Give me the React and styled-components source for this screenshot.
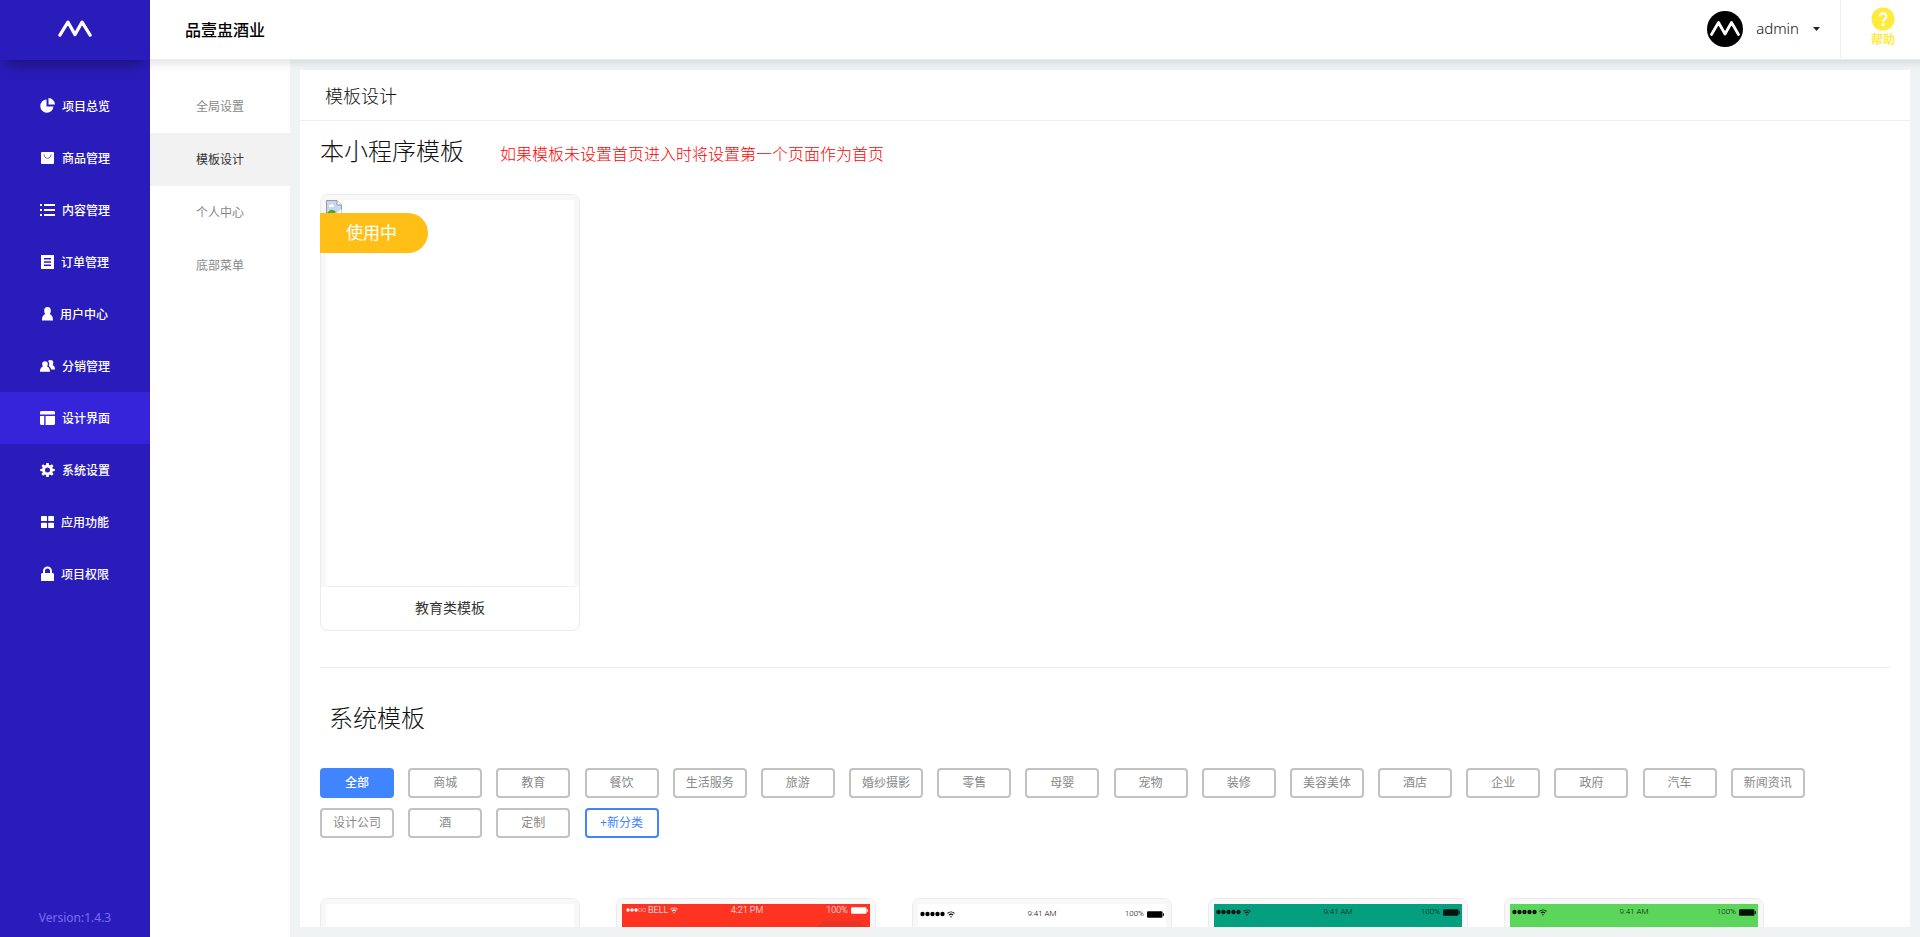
import React from "react";
import styled, { createGlobalStyle, css } from "styled-components";

const GlobalStyle = createGlobalStyle`
  *, *::before, *::after { box-sizing: border-box; }
  body {
    margin: 0;
    font-family: "Noto Sans", "Noto Sans CJK SC", sans-serif;
    font-size: 14px;
    color: #333;
    background: #eff3f4;
  }
  a { color: inherit; text-decoration: none; }
  button { font: inherit; cursor: pointer; }
  h1, h2, p, ul { margin: 0; padding: 0; font-weight: 300; }
  ul { list-style: none; }
  svg { display: block; flex: none; }
`;

const Page = styled.div`
  display: flex;
  height: 100vh;
  overflow: hidden;
`;

const Sidebar = styled.aside`
  flex: none;
  display: flex;
  flex-direction: column;
  width: 150px;
  background: #2a1cbb;
  color: #fff;
`;

const Brand = styled.a`
  display: flex;
  align-items: center;
  justify-content: center;
  height: 60px;
  padding-bottom: 3px;
  box-shadow: 0 10px 14px -6px rgba(0, 0, 0, 0.4);
`;

const MainNav = styled.nav`
  flex: 1;
  padding-top: 20px;
`;

const MainLink = styled.a`
  display: flex;
  align-items: center;
  justify-content: center;
  gap: 7px;
  height: 52px;
  font-size: 12px;
  font-weight: 500;
  background: ${(p) => (p.$active ? "#3524da" : "transparent")};
`;

const Version = styled.p`
  height: 38px;
  line-height: 38px;
  font-size: 12px;
  font-weight: 400;
  text-align: center;
  color: #7a6cf5;
`;

const Body = styled.div`
  flex: 1;
  min-width: 0;
  display: flex;
  flex-direction: column;
`;

const TopBar = styled.header`
  flex: none;
  display: flex;
  align-items: stretch;
  height: 60px;
  background: #fff;
  border-bottom: 1px solid #ececee;
`;

const ProjectName = styled.h1`
  flex: 1;
  padding-left: 35px;
  line-height: 60px;
  font-size: 16px;
  font-weight: 500;
  color: #000;
`;

const Account = styled.button`
  display: flex;
  align-items: center;
  padding: 0 20px 2px 0;
  border: 0;
  border-right: 1px solid #eee;
  background: none;
  color: #333;
  font-size: 15px;
  font-weight: 300;
`;

const AccountName = styled.span`
  margin: 0 14px 2px 13px;
  color: #111;
`;

const Help = styled.a`
  display: flex;
  flex-direction: column;
  align-items: center;
  width: 79px;
  padding: 7px 0 0 5px;
  font-size: 12px;
  line-height: 18px;
  font-weight: 700;
  color: #ffeb3b;
`;

const Workspace = styled.div`
  flex: 1;
  min-height: 0;
  display: flex;
`;

const SubNav = styled.nav`
  flex: none;
  width: 140px;
  padding-top: 20px;
  background: #fff;
  box-shadow: inset 0 14px 12px -12px rgba(0, 0, 0, 0.14);
`;

const SubLink = styled.a`
  display: block;
  height: 53px;
  line-height: 54px;
  font-size: 12px;
  font-weight: 400;
  text-align: center;
  color: ${(p) => (p.$active ? "#333" : "#888")};
  background: ${(p) => (p.$active ? "#f2f2f2" : "transparent")};
`;

const Main = styled.main`
  flex: 1;
  min-width: 0;
  padding: 10px;
  background: #eff3f4;
  box-shadow: inset 0 12px 10px -10px rgba(0, 0, 0, 0.12);
`;

const Panel = styled.div`
  height: 100%;
  overflow-y: auto;
  scrollbar-width: none;
  background: #fff;
`;

const PanelTitle = styled.h2`
  height: 51px;
  padding: 0 25px;
  border-bottom: 1px solid #eee;
  line-height: 52px;
  font-size: 18px;
  color: #111;
`;

const Section = styled.section`
  padding: 0 20px;
`;

const SectionHead = styled.div`
  display: flex;
  align-items: baseline;
  gap: 36px;
  height: ${(p) => (p.$tall ? 80 : 73)}px;
  line-height: 60px;
`;

const SectionTitle = styled.h2`
  font-size: 24px;
  color: #111;
  ${(p) =>
    p.$inset &&
    css`
      padding-left: 9px;
    `}
`;

const Notice = styled.p`
  font-size: 16px;
  color: #f00;
`;

const Divider = styled.hr`
  margin: 36px 0 20px;
  border: 0;
  border-top: 1px solid #eee;
`;

const Cards = styled.ul`
  display: flex;
  flex-wrap: wrap;
  gap: 36px;
`;

const Card = styled.li`
  position: relative;
  width: 260px;
  border: 1px solid #ebebeb;
  border-radius: 8px;
`;

const Preview = styled.div`
  padding: 5px 5px 0;
  border-radius: 7px 7px 0 0;
  background: #f8f8f8;
`;

const Screen = styled.div`
  height: 387px;
  overflow: hidden;
  border-bottom: 1px solid #eee;
  background: ${(p) => p.$bg || "#fff"};
`;

const Caption = styled.p`
  height: 43px;
  line-height: 42px;
  font-size: 14px;
  font-weight: 400;
  text-align: center;
`;

const InUse = styled.span`
  position: absolute;
  top: 18px;
  left: -1px;
  width: 108px;
  height: 40px;
  padding-left: 26px;
  border-radius: 0 20px 20px 0;
  line-height: 40px;
  font-size: 17px;
  font-weight: 400;
  color: #fff;
  background: #ffbf17;
`;

const Tags = styled.div`
  padding-bottom: 50px;
  font-size: 16px;
  line-height: 40px;
`;

const Tag = styled.button`
  display: inline-block;
  vertical-align: top;
  width: 74px;
  height: 30px;
  margin: 0 10px 10px 0;
  padding: 0;
  border: 2px solid #c2c2c2;
  border-radius: 4px;
  background: #fff;
  color: #888;
  font-size: 12px;
  line-height: 26px;
  font-weight: 400;
  ${(p) =>
    p.$kind === "active" &&
    css`
      border-color: #4184ff;
      background: #4184ff;
      color: #fff;
      font-weight: 500;
    `}
  ${(p) =>
    p.$kind === "add" &&
    css`
      border-color: #4184ff;
      color: #4184ff;
    `}
`;

const StatusRow = styled.div`
  display: grid;
  grid-template-columns: 1fr auto 1fr;
  align-items: center;
  padding: ${(p) => p.$top}px 2px 0 ${(p) => p.$left || 2}px;
  font-family: Roboto, sans-serif;
  font-size: ${(p) => p.$size || 8}px;
  line-height: 10px;
  color: ${(p) => p.$ink};
`;

const StatusSide = styled.span`
  display: flex;
  align-items: center;
  justify-content: ${(p) => (p.$end ? "flex-end" : "flex-start")};
  gap: ${(p) => (p.$end ? 3 : 2)}px;
`;

const Capsule = styled.div`
  width: 49px;
  height: 20px;
  margin: 6px 4px 0 auto;
  border-radius: 10px;
  background: #ea3325;
`;

const Mountain = ({ width, stroke }) => (
  <svg width={width} height={width / 2} viewBox="0 0 36 18" fill="none" stroke={stroke} strokeWidth="3.4" strokeLinecap="round" strokeLinejoin="round" aria-hidden="true">
    <path d="M2 16 10.5 2.2 18 15.5 25.5 2.2 34 16" />
  </svg>
);

const Avatar = () => (
  <svg width="36" height="36" viewBox="0 0 36 36" aria-hidden="true">
    <circle cx="18" cy="18" r="18" fill="#000" />
    <path d="M4.500 23.500 11.500 11.500 18 23 24.500 11.500 31.500 23.500" fill="none" stroke="#fff" strokeWidth="2.800" strokeLinecap="round" strokeLinejoin="round" />
  </svg>
);

const QuestionMark = () => (
  <svg width="24" height="24" viewBox="0 0 24 24" aria-hidden="true">
    <circle cx="12" cy="12" r="11.500" fill="#ffeb3b" />
    <path d="M8.700 9.300a3.300 3.100 0 1 1 5.200 2.600c-1.300.9-1.800 1.300-1.800 2.800" fill="none" stroke="#fff" strokeWidth="2.300" />
    <circle cx="12.100" cy="17.600" r="1.500" fill="#fff" />
  </svg>
);

const icons = {
  pie: [15, <><path d="M6.500 1.500V8.500H13.500A6.600 6.600 0 1 1 6.500 1.500Z" /><path d="M8.500 0A6.500 6.500 0 0 1 15 6.500H8.500Z" /></>],
  bag: [15, <><rect x="1" y="2" width="13" height="12" rx="1" /><path d="M4 4.500c0 5 7 5 7 0" fill="none" stroke="#6a5fd0" strokeWidth="1" /></>],
  list: [15, <path d="M0 2h2v2H0zM4 2h11v2H4zM0 7h2v2H0zM4 7h11v2H4zM0 12h2v2H0zM4 12h11v2H4z" />],
  order: [13, <path fillRule="evenodd" d="M0 1h13v14H0V1zM3 4v1.500h7V4zM3 7.300v1.500h7V7.300zM3 10.600v1.500h7v-1.500z" />],
  user: [11, <path d="M5.500 1C8 1 9 3 8.800 5 8.700 6.500 8 7.500 8 8.200 9.500 9 11 10 11 14.500H0C0 10 1.500 9 3 8.200 3 7.500 2.300 6.500 2.200 5 2 3 3 1 5.500 1Z" />],
  users: [15, <><path d="M5 3.200c2 0 3 1.400 2.800 3-.1 1.100-.7 1.900-.7 2.400 1.300.7 2.900 1.700 2.900 5.200H0c0-3.500 1.600-4.500 2.900-5.200 0-.5-.6-1.300-.7-2.400-.2-1.600.8-3 2.800-3Z" /><path d="M10.500 2c2 0 3 1.300 2.800 3-.1 1-.6 1.800-.6 2.300 1.200.7 2.300 1.500 2.300 4.200h-3.800C10.700 9.500 9.700 8.600 8.800 8c.5-1.300.9-3.700-.8-5C8.600 2.400 9.400 2 10.500 2Z" /></>],
  layout: [15, <path d="M1 1h13l1 1v2.600H0V2zM0 6h4.200v9H1l-1-1zM5.600 6H15v8l-1 1H5.600z" />],
  gear: [15, <path fillRule="evenodd" d="M6.300 1h2.400l.3 2 1.200.5 1.700-1.200 1.600 1.600-1.200 1.700.5 1.200 2 .3v1.800l-2 .3-.5 1.200 1.200 1.700-1.600 1.600-1.700-1.200L9 13l-.3 2H6.300L6 13l-1.200-.5-1.700 1.200-1.600-1.600 1.200-1.700-.5-1.200-2-.3V7.100l2-.3.5-1.200-1.200-1.700 1.600-1.600 1.700 1.200L6 3zM7.500 5.500a2.500 2.500 0 1 0 0 5 2.500 2.500 0 0 0 0-5z" />],
  grid: [13, <><rect y="2" width="6" height="5" rx=".6" /><rect x="7.200" y="2" width="5.800" height="5" rx=".6" /><rect y="8.700" width="6" height="5.300" rx=".6" /><rect x="7.200" y="8.700" width="5.800" height="5.300" rx=".6" /></>],
  lock: [13, <path fillRule="evenodd" d="M2 7V5a4.500 4.500 0 0 1 9 0v2h1l1 1v7H0V8l1-1zM4 7h5V5a2.500 2.500 0 0 0-5 0z" />],
};

const NavIcon = ({ name }) => {
  const [width, shape] = icons[name];
  return (
    <svg width={width} height="16" viewBox={`0 0 ${width} 16`} fill="#fff" aria-hidden="true">
      {shape}
    </svg>
  );
};

const BrokenImage = () => (
  <svg width="16" height="16" viewBox="0 0 16 16" role="img" aria-label="教育类模板">
    <path d="M.5.500H11L15.500 5V15.500H.5Z" fill="#c6d7f5" stroke="#9a9a9a" />
    <path d="M11 .5V5h4.500" fill="#fff" stroke="#9a9a9a" />
    <path d="M3 6.500c0-1.500 1.200-2 2-1.500.5-1.600 2.500-1 2.500.5 1 0 1 1.500 0 1.500H3.500z" fill="#fff" />
    <path d="M1 15v-2c3-4 6-4.500 9-1l-4 3z" fill="#4aa82f" />
    <path d="M8 15.500 15.500 9v6.500z" fill="#fff" />
  </svg>
);

const Dots = ({ filled = 5, pitch = 5, r = 2.2 }) => (
  <svg width={pitch * 5} height="6" viewBox={`0 0 ${pitch * 5} 6`} aria-hidden="true">
    {[0, 1, 2, 3, 4].map((i) => (
      <circle key={i} cx={pitch * i + pitch / 2} cy="3" r={r} fill={i < filled ? "currentColor" : "none"} stroke={i < filled ? "none" : "currentColor"} strokeWidth=".4" />
    ))}
  </svg>
);

const Wifi = () => (
  <svg width="8" height="7" viewBox="0 0 8 7" fill="none" stroke="currentColor" aria-hidden="true">
    <path d="M.5 2.400c2-1.900 5-1.900 7 0M1.900 4.100c1.200-1.100 3-1.100 4.200 0" strokeWidth="1.100" />
    <circle cx="4" cy="5.700" r=".7" fill="currentColor" stroke="none" />
  </svg>
);

const Battery = () => (
  <svg width="17" height="7" viewBox="0 0 17 7" fill="currentColor" aria-hidden="true">
    <rect y=".3" width="15.500" height="6.400" rx="1.200" />
    <rect x="15.900" y="2.200" width="1.100" height="2.600" rx=".5" />
  </svg>
);

const StatusBar = ({ top, left, size, ink, carrier, time, filled, pitch, r }) => (
  <StatusRow $top={top} $left={left} $size={size} $ink={ink}>
    <StatusSide>
      <Dots filled={filled} pitch={pitch} r={r} />
      {carrier && <span>{carrier}</span>}
      <Wifi />
    </StatusSide>
    <span>{time}</span>
    <StatusSide $end>
      <span>100%</span>
      <Battery />
    </StatusSide>
  </StatusRow>
);

const mainNav = [
  ["pie", "项目总览"],
  ["bag", "商品管理"],
  ["list", "内容管理"],
  ["order", "订单管理"],
  ["user", "用户中心"],
  ["users", "分销管理"],
  ["layout", "设计界面"],
  ["gear", "系统设置"],
  ["grid", "应用功能"],
  ["lock", "项目权限"],
];

const subNav = ["全局设置", "模板设计", "个人中心", "底部菜单"];

const tags = [
  "全部", "商城", "教育", "餐饮", "生活服务", "旅游", "婚纱摄影", "零售", "母婴", "宠物", "装修",
  "美容美体", "酒店", "企业", "政府", "汽车", "新闻资讯", "设计公司", "酒", "定制",
];

const templates = [
  { bg: "#fff" },
  { bg: "#ff3322", capsule: true, bar: { top: 1, left: 4, size: 9, ink: "#fff", carrier: "BELL", time: "4:21 PM", filled: 3, pitch: 4, r: 1.7 } },
  { bg: "#fff", bar: { top: 5, ink: "#000", time: "9:41 AM" } },
  { bg: "#049f7e", bar: { top: 3, ink: "#06140f", time: "9:41 AM" } },
  { bg: "#5cd65a", bar: { top: 3, ink: "#061206", time: "9:41 AM" } },
];

export default function App() {
  return (
    <>
      <GlobalStyle />
      <Page>
        <Sidebar>
          <Brand href="#" aria-label="首页">
            <Mountain width={34} stroke="#fff" />
          </Brand>
          <MainNav>
            {mainNav.map(([icon, label]) => (
              <MainLink key={label} href="#" $active={label === "设计界面"}>
                <NavIcon name={icon} />
                {label}
              </MainLink>
            ))}
          </MainNav>
          <Version>Version:1.4.3</Version>
        </Sidebar>
        <Body>
          <TopBar>
            <ProjectName>品壹盅酒业</ProjectName>
            <Account type="button">
              <Avatar />
              <AccountName>admin</AccountName>
              <svg width="7" height="4" viewBox="0 0 7 4" aria-hidden="true">
                <path d="M0 0h7L3.500 4z" fill="#222" />
              </svg>
            </Account>
            <Help href="#">
              <QuestionMark />
              帮助
            </Help>
          </TopBar>
          <Workspace>
            <SubNav>
              {subNav.map((label) => (
                <SubLink key={label} href="#" $active={label === "模板设计"}>
                  {label}
                </SubLink>
              ))}
            </SubNav>
            <Main>
              <Panel>
                <PanelTitle>模板设计</PanelTitle>
                <Section>
                  <SectionHead>
                    <SectionTitle>本小程序模板</SectionTitle>
                    <Notice>如果模板未设置首页进入时将设置第一个页面作为首页</Notice>
                  </SectionHead>
                  <Cards>
                    <Card>
                      <Preview>
                        <Screen>
                          <BrokenImage />
                        </Screen>
                      </Preview>
                      <Caption>教育类模板</Caption>
                      <InUse>使用中</InUse>
                    </Card>
                  </Cards>
                  <Divider />
                </Section>
                <Section>
                  <SectionHead $tall>
                    <SectionTitle $inset>系统模板</SectionTitle>
                  </SectionHead>
                  <Tags>
                    {tags.map((label) => (
                      <React.Fragment key={label}>
                        <Tag type="button" $kind={label === "全部" ? "active" : undefined}>
                          {label}
                        </Tag>{" "}
                      </React.Fragment>
                    ))}
                    <Tag type="button" $kind="add">+新分类</Tag>
                  </Tags>
                  <Cards>
                    {templates.map(({ bg, bar, capsule }, i) => (
                      <Card key={i}>
                        <Preview>
                          <Screen $bg={bg}>
                            {bar && <StatusBar {...bar} />}
                            {capsule && <Capsule />}
                          </Screen>
                        </Preview>
                      </Card>
                    ))}
                  </Cards>
                </Section>
              </Panel>
            </Main>
          </Workspace>
        </Body>
      </Page>
    </>
  );
}
